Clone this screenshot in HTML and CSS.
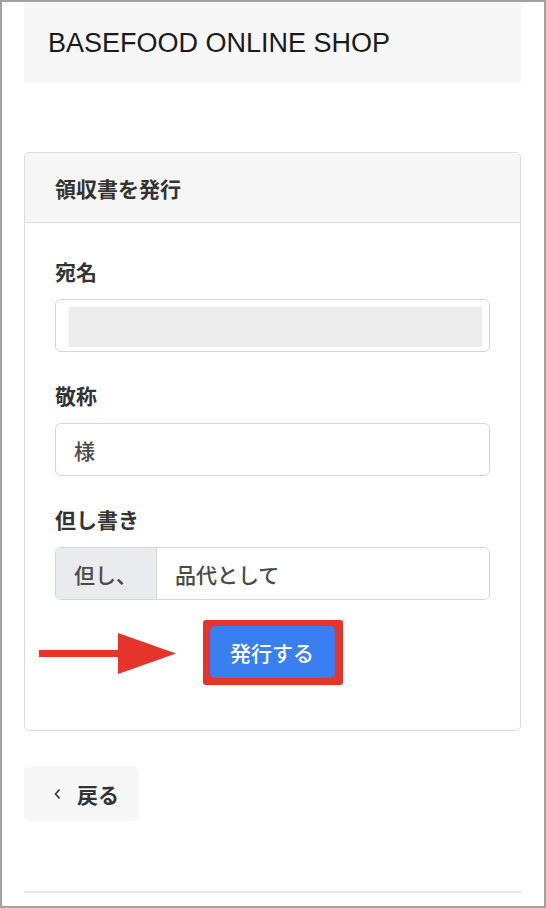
FILE: index.html
```html
<!DOCTYPE html>
<html lang="ja">
<head>
    <meta charset="UTF-8">
    <meta name="viewport" content="width=device-width, initial-scale=1.0">
    <title>BASEFOOD ONLINE SHOP - 領収書を発行</title>
    <link rel="stylesheet" href="styles.css">
</head>
<body>
    <div class="frame">
        <header class="shop-header">
            <h1>BASEFOOD ONLINE SHOP</h1>
        </header>

        <section class="card">
            <div class="card-header">領収書を発行</div>
            <div class="card-body">
                <div class="field">
                    <label class="field-label">宛名</label>
                    <div class="input input-redacted">
                        <span class="redacted"></span>
                    </div>
                </div>

                <div class="field">
                    <label class="field-label">敬称</label>
                    <div class="input">様</div>
                </div>

                <div class="field">
                    <label class="field-label">但し書き</label>
                    <div class="input-group">
                        <span class="input-prefix">但し、</span>
                        <span class="input-value">品代として</span>
                    </div>
                </div>

                <div class="submit-row">
                    <!-- annotation arrow -->
                    <svg class="hint-arrow" width="137" height="41" viewBox="0 0 137 41">
                        <rect x="0" y="17" width="81" height="7" fill="#e5342a"/>
                        <polygon points="79,0 137,20.5 79,41" fill="#e5342a"/>
                    </svg>
                    <span class="highlight">
                        <button class="btn-primary" type="button">発行する</button>
                    </span>
                </div>
            </div>
        </section>

        <a class="btn-back" href="#">
            <svg width="7" height="12" viewBox="0 0 7 12">
                <path d="M5.5 1.5 L1.5 6 L5.5 10.5" fill="none" stroke="#333" stroke-width="1.6"/>
            </svg>
            <span>戻る</span>
        </a>

        <div class="footer-line"></div>
    </div>
</body>
</html>
```

FILE: styles.css
```css
* {
    margin: 0;
    padding: 0;
    box-sizing: border-box;
}

html, body {
    height: 100%;
    background-color: #ffffff;
    color: #333333;
    font-family: "Noto Sans CJK JP", "Liberation Sans", sans-serif;
}

.frame {
    height: 908px;
    border: 2px solid #a2a2a2;
    padding: 1px 23px 0 22px;
    display: flex;
    flex-direction: column;
}

.shop-header {
    background-color: #f7f7f7;
    height: 80px;
    display: flex;
    align-items: center;
    padding-left: 24px;
}

.shop-header h1 {
    font-family: "Liberation Sans", Arial, sans-serif;
    font-weight: normal;
    font-size: 27px;
    color: #1a1a1a;
    padding-top: 1px;
}

.card {
    margin-top: 69px;
    border: 1px solid #dcdcdc;
    border-radius: 5px;
    overflow: hidden;
}

.card-header {
    background-color: #f6f6f6;
    border-bottom: 1px solid #dcdcdc;
    height: 70px;
    padding: 0 30px;
    display: flex;
    align-items: center;
    font-size: 21px;
    font-weight: 600;
    color: #333;
}

.card-body {
    padding: 33px 30px 45px 30px;
}

.field {
    margin-bottom: 28px;
}

.field-label {
    display: block;
    font-size: 21px;
    line-height: 30px;
    font-weight: 600;
    color: #333;
    margin-bottom: 13px;
}

.input {
    height: 53px;
    border: 1px solid #d5d7dc;
    border-radius: 6px;
    display: flex;
    align-items: center;
    padding: 0 18px;
    font-size: 21px;
    font-weight: 500;
    color: #4a4a4a;
}

.input-redacted {
    padding: 7px 7px 4px 13px;
    align-items: stretch;
}

.redacted {
    flex: 1;
    background-color: #ececec;
}

.input-group {
    height: 53px;
    border: 1px solid #d5d7dc;
    border-radius: 6px;
    display: flex;
    overflow: hidden;
    font-size: 21px;
    font-weight: 500;
    color: #4a4a4a;
}

.input-prefix {
    width: 101px;
    background-color: #e9ebee;
    border-right: 1px solid #d5d7dc;
    display: flex;
    align-items: center;
    padding-left: 18px;
}

.input-value {
    display: flex;
    align-items: center;
    padding-left: 18px;
}

.submit-row {
    position: relative;
    display: flex;
    justify-content: center;
    margin-top: -8px;
}

.hint-arrow {
    position: absolute;
    left: -16px;
    top: 13px;
}

.highlight {
    display: inline-block;
    background-color: #e5342a;
    border-radius: 3px;
    padding: 6px 8px 7px 7px;
}

.btn-primary {
    display: block;
    width: 125px;
    height: 52px;
    background-color: #3a7ff2;
    color: #ffffff;
    border: none;
    border-radius: 5px;
    font-family: "Noto Sans CJK JP", sans-serif;
    font-size: 21px;
    font-weight: 500;
    cursor: pointer;
}

.btn-back {
    margin-top: 35px;
    align-self: flex-start;
    height: 55px;
    display: flex;
    align-items: center;
    gap: 16px;
    padding: 0 20px 0 30px;
    background-color: #f7f7f7;
    border-radius: 6px;
    text-decoration: none;
    color: #333;
    font-size: 21px;
    font-weight: 600;
}

.footer-line {
    margin-top: 70px;
    height: 2px;
    background-color: #e8e8e8;
}
```
